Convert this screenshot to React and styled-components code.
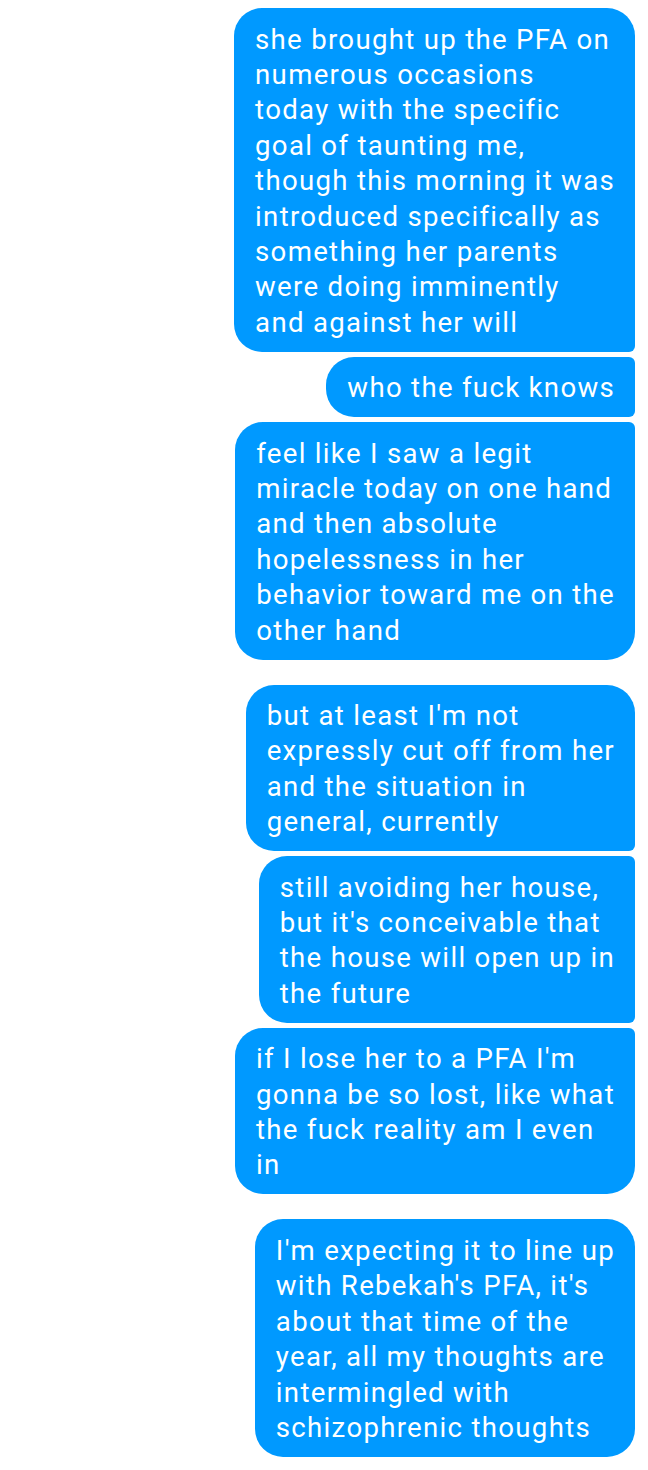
import React from "react";
import styled, { createGlobalStyle } from "styled-components";

const GlobalStyle = createGlobalStyle`
  html, body {
    margin: 0;
    padding: 0;
    background: #ffffff;
  }
  body {
    font-family: Roboto, "Noto Sans", "Liberation Sans", sans-serif;
  }
`;

const Thread = styled.div`
  display: flex;
  flex-direction: column;
  align-items: flex-end;
  padding: 8px 13px 14px 0;
  width: 648px;
  box-sizing: border-box;
`;

const Group = styled.div`
  display: flex;
  flex-direction: column;
  align-items: flex-end;
  gap: 5px;
  & + & {
    margin-top: 25px;
  }
`;

const Bubble = styled.div`
  background: #0099ff;
  color: #ffffff;
  font-size: 27.6px;
  line-height: 35.4px;
  letter-spacing: 1.3px;
  padding: 13.5px 20px 11.5px 21px;
  border-radius: 28px ${(p) => (p.$first ? "28px" : "6px")}
    ${(p) => (p.$last ? "28px" : "6px")} 28px;
`;

const Line = styled.span`
  display: block;
  white-space: nowrap;
`;

const groups = [
  [
    [
      "she brought up the PFA on",
      "numerous occasions",
      "today with the specific",
      "goal of taunting me,",
      "though this morning it was",
      "introduced specifically as",
      "something her parents",
      "were doing imminently",
      "and against her will",
    ],
    ["who the fuck knows"],
    [
      "feel like I saw a legit",
      "miracle today on one hand",
      "and then absolute",
      "hopelessness in her",
      "behavior toward me on the",
      "other hand",
    ],
  ],
  [
    [
      "but at least I'm not",
      "expressly cut off from her",
      "and the situation in",
      "general, currently",
    ],
    [
      "still avoiding her house,",
      "but it's conceivable that",
      "the house will open up in",
      "the future",
    ],
    [
      "if I lose her to a PFA I'm",
      "gonna be so lost, like what",
      "the fuck reality am I even",
      "in",
    ],
  ],
  [
    [
      "I'm expecting it to line up",
      "with Rebekah's PFA, it's",
      "about that time of the",
      "year, all my thoughts are",
      "intermingled with",
      "schizophrenic thoughts",
    ],
  ],
];

export default function App() {
  return (
    <>
      <GlobalStyle />
      <Thread>
        {groups.map((msgs, gi) => (
          <Group key={gi}>
            {msgs.map((lines, mi) => (
              <Bubble
                key={mi}
                $first={mi === 0}
                $last={mi === msgs.length - 1}
              >
                {lines.map((l, li) => (
                  <Line key={li}>{l}</Line>
                ))}
              </Bubble>
            ))}
          </Group>
        ))}
      </Thread>
    </>
  );
}
